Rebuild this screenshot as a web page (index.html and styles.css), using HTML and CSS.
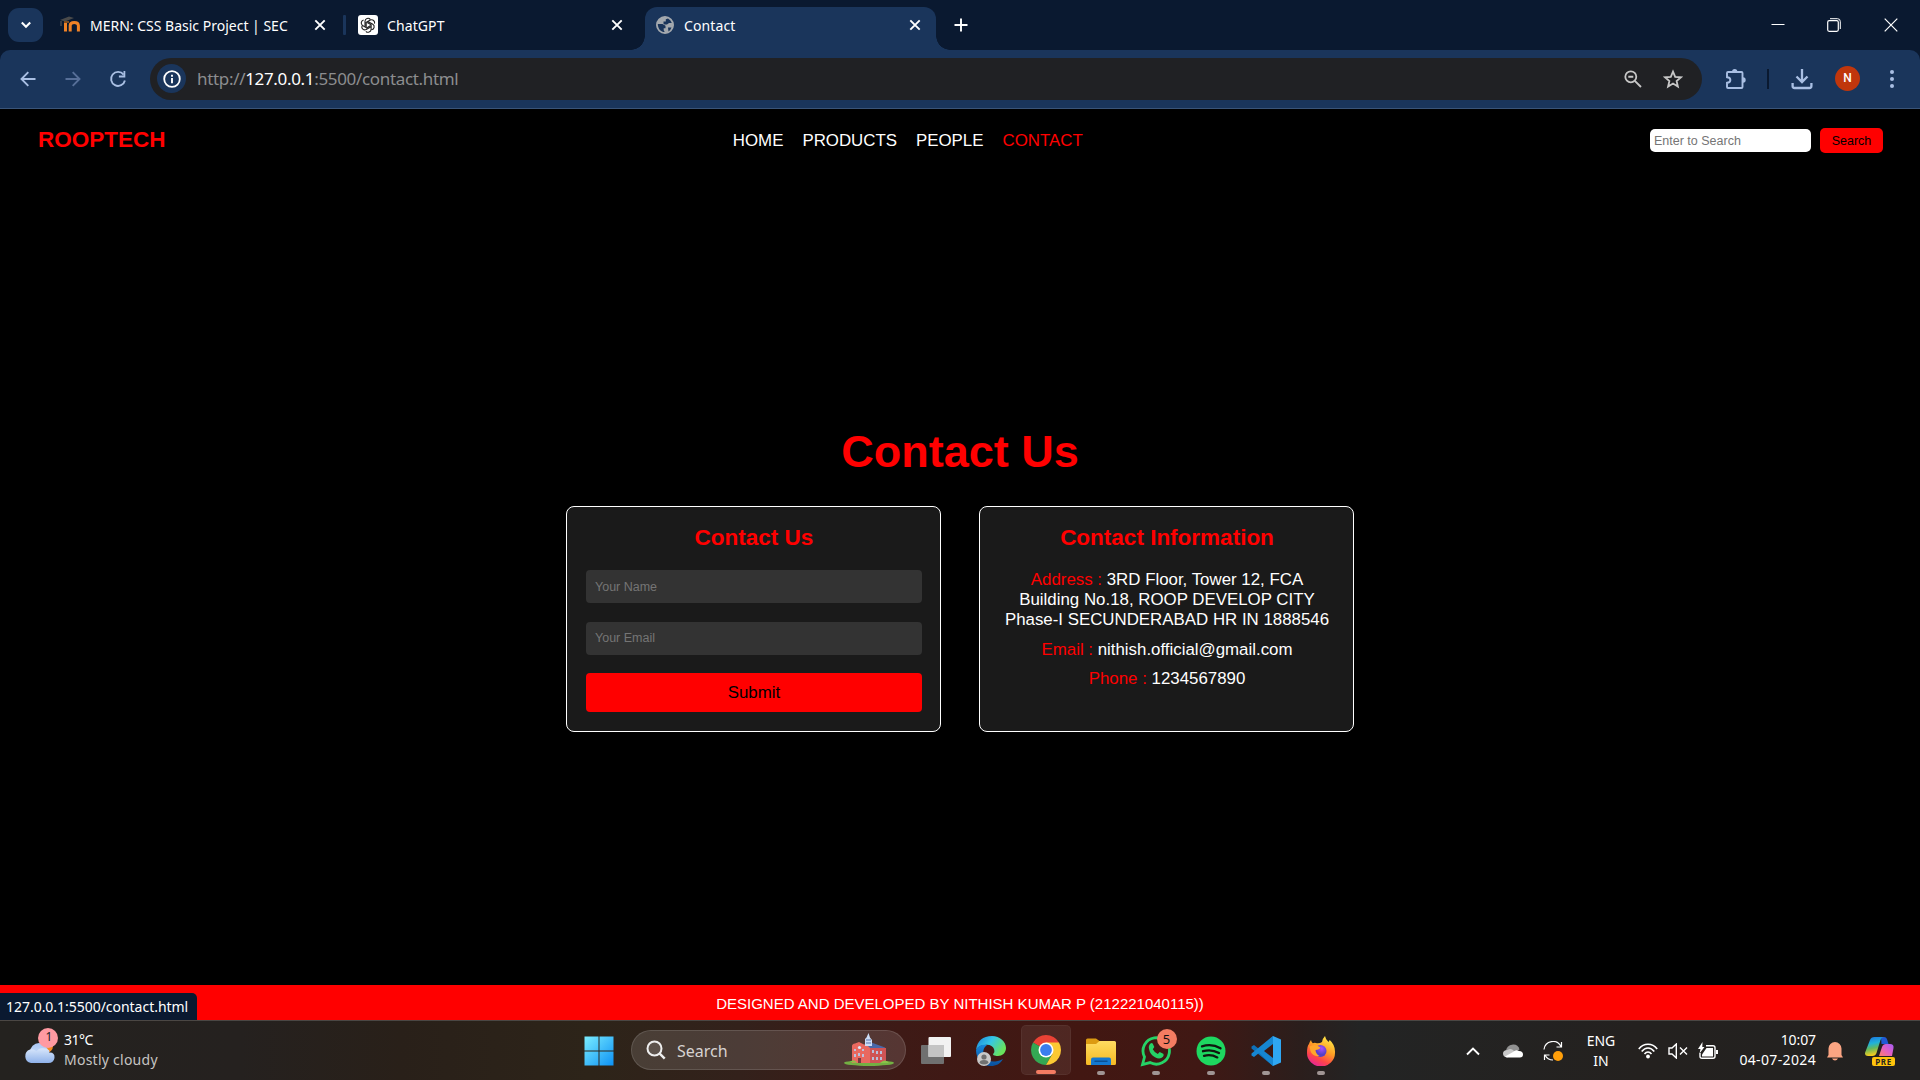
FILE: index.html
```html
<!DOCTYPE html>
<html lang="en">
<head>
<meta charset="utf-8">
<title>Contact</title>
<link rel="stylesheet" href="styles.css">
</head>
<body>
<div class="screen">
  <header class="tabstrip">
    <button class="tab-menu" aria-label="Search tabs"><svg width="12" height="8" viewBox="0 0 12 8"><path d="M1.8 1.500 6 5.700l4.200-4.200" fill="none" stroke="#fff" stroke-width="2.100"/></svg></button>
    <div class="tab tab-mern">
      <svg class="favicon" width="20" height="20" viewBox="0 0 20 20"><path d="M0 5 9 1.500 14 3 5 6.500z" fill="#4a4a4a"/><path d="M1 6v5" stroke="#665f58" stroke-width="1"/><path d="M5.500 8v8.500M10.200 16.500v-6q0-3 4-3t4.200 3v6" fill="none" stroke="#f08226" stroke-width="3"/><path d="M4 7h5" stroke="#7c4a20" stroke-width="2"/></svg>
      <span class="tab-title t-mern">MERN: CSS Basic Project | SEC</span>
      <svg class="close" width="12" height="12" viewBox="0 0 12 12"><path d="m1.300 1.300 9.400 9.400m0-9.400-9.400 9.400" stroke="#fff" stroke-width="1.900"/></svg>
    </div>
    <i class="tab-sep"></i>
    <div class="tab tab-gpt">
      <svg class="favicon" width="20" height="20" viewBox="0 0 20 20"><rect width="20" height="20" rx="3" fill="#fff"/><g fill="none" stroke="#222" stroke-width="1.100"><path id="petal" d="M7 11.800V6.200a3 3 0 0 1 5.300-1.800M8.200 12V7.400l4.100-2.300a3 3 0 0 1 4.200 3.600"/><use href="#petal" transform="rotate(120 10 10)"/><use href="#petal" transform="rotate(240 10 10)"/></g></svg>
      <span class="tab-title t-gpt">ChatGPT</span>
      <svg class="close" width="12" height="12" viewBox="0 0 12 12"><path d="m1.300 1.300 9.400 9.400m0-9.400-9.400 9.400" stroke="#fff" stroke-width="1.900"/></svg>
    </div>
    <div class="tab tab-active">
      <svg class="favicon" width="20" height="20" viewBox="0 0 20 20"><circle cx="10" cy="10" r="8.100" fill="#a3a8ae" stroke="#a3a8ae" stroke-width="1.800"/><path d="M2.800 9h4.700l3 1.800v2.400H8.700v2l1 1.900C6 17 2.800 14 2.800 9zM8.500 8.700V6.500h2.300V4.300L13 3.500q3 1.500 3.800 4.500H14l-2 1.500H9.500zM13 12.500h3.500q-1 2.700-3 4z" fill="#1a355b"/></svg>
      <span class="tab-title t-contact">Contact</span>
      <svg class="close" width="12" height="12" viewBox="0 0 12 12"><path d="m1.300 1.300 9.400 9.400m0-9.400-9.400 9.400" stroke="#fff" stroke-width="1.900"/></svg>
    </div>
    <svg class="plus" width="14" height="14" viewBox="0 0 14 14"><path d="M7 .5v13M.5 7h13" stroke="#fff" stroke-width="1.900"/></svg>
    <div class="win-controls">
      <svg width="14" height="14" viewBox="0 0 14 14"><path d="M.5 6.500h13" stroke="#fff"/></svg>
      <svg width="14" height="14" viewBox="0 0 14 14"><path d="M3 .7h7.500q2.800 0 2.800 2.800V11" fill="none" stroke="#fff"/><rect x=".7" y="2.700" width="10.600" height="10.600" rx="1.500" fill="none" stroke="#fff" stroke-width="1.200"/></svg>
      <svg width="14" height="14" viewBox="0 0 14 14"><path d="m.7.700 12.600 12.600m0-12.600L.7 13.300" stroke="#fff" stroke-width="1.200"/></svg>
    </div>
  </header>

  <div class="toolbar-back"><div class="toolbar">
    <svg class="nav-ico" width="16" height="16" viewBox="0 0 16 16"><path d="M15.500 8H2M8.300 1.200 1.500 8l6.800 6.800" fill="none" stroke="#a9bfe3" stroke-width="1.900"/></svg>
    <svg class="nav-ico" width="16" height="16" viewBox="0 0 16 16"><path d="M.5 8H14M7.700 1.200 14.500 8l-6.800 6.800" fill="none" stroke="#576f98" stroke-width="1.900"/></svg>
    <svg class="nav-ico" width="18" height="18" viewBox="0 0 18 18"><path d="M14.600 4.600A7 7 0 1 0 15.900 10.500" fill="none" stroke="#a9bfe3" stroke-width="1.900"/><path d="M16.300 1v6.400H9.900V5.600h4.600V1z" fill="#a9bfe3"/></svg>
    <div class="omnibox">
      <span class="site-info"><svg width="18" height="18" viewBox="0 0 18 18"><circle cx="9" cy="9" r="7.800" fill="none" stroke="#fff" stroke-width="1.800"/><path d="M9 8v5.200M9 4.700v2" stroke="#fff" stroke-width="1.900"/></svg></span>
      <span class="url">http://<b>127.0.0.1</b>:5500/contact.html</span>
      <svg class="mag" width="18" height="18" viewBox="0 0 18 18"><circle cx="6.800" cy="6.800" r="5.500" fill="none" stroke="#c7c7c7" stroke-width="1.800"/><path d="M4.300 6.800h5M10.800 10.800l6.200 6.200" stroke="#c7c7c7" stroke-width="1.900"/></svg>
      <svg width="20" height="20" viewBox="0 0 20 20"><path d="m10 2.600 2.200 5.200 5.700.5-4.300 3.700 1.300 5.600-4.900-3-4.900 3L6.400 12 2.100 8.300l5.700-.5z" fill="none" stroke="#c7c7c7" stroke-width="1.800"/></svg>
    </div>
    <svg class="puzzle" width="22" height="22" viewBox="0 0 22 22"><path d="M3 4h13.500q1 0 1 1v14q0 1-1 1H3q-1 0-1-1v-4.200c4.500-.3 4.500-5.300 0-5.600V5q0-1 1-1z" fill="none" stroke="#a9bfe3" stroke-width="1.900"/><path d="M7 4a2.700 3 0 0 1 5.400 0zM18 9.300a2.700 2.700 0 0 1 0 5.400z" fill="#a9bfe3"/></svg>
    <i class="tool-sep"></i>
    <svg class="download" width="22" height="22" viewBox="0 0 22 22"><path d="M11 1v12M5.500 8.500 11 14l5.500-5.500M1.600 15v3q0 2 2 2h14.800q2 0 2-2v-3" fill="none" stroke="#a9bfe3" stroke-width="2.300"/></svg>
    <span class="avatar">N</span>
    <svg class="dots" width="4" height="20" viewBox="0 0 4 20" fill="#a9bfe3"><circle cx="2" cy="3" r="2"/><circle cx="2" cy="10" r="2"/><circle cx="2" cy="17" r="2"/></svg>
  </div></div>

  <main class="page">
    <nav class="site-nav">
      <div class="brand">ROOPTECH</div>
      <ul class="links"><li>HOME</li><li>PRODUCTS</li><li>PEOPLE</li><li class="current">CONTACT</li></ul>
      <form class="search"><input type="text" placeholder="Enter to Search"><button type="button">Search</button></form>
    </nav>
    <section class="contact">
      <h1>Contact Us</h1>
      <div class="cards">
        <form class="card">
          <h2>Contact Us</h2>
          <input type="text" placeholder="Your Name">
          <input type="text" placeholder="Your Email">
          <button type="button">Submit</button>
        </form>
        <div class="card">
          <h2>Contact Information</h2>
          <p><span>Address :</span> 3RD Floor, Tower 12, FCA<br>Building No.18, ROOP DEVELOP CITY<br>Phase-I SECUNDERABAD HR IN 1888546</p>
          <p><span>Email :</span> nithish.official@gmail.com</p>
          <p><span>Phone :</span> 1234567890</p>
        </div>
      </div>
    </section>
    <footer class="site-footer">DESIGNED AND DEVELOPED BY NITHISH KUMAR P (212221040115))</footer>
    <div class="status">127.0.0.1:5500/contact.html</div>
  </main>

  <div class="taskbar">
    <div class="weather">
      <svg width="36" height="38" viewBox="0 0 36 38"><defs><linearGradient id="cl" x2="0" y2="1"><stop stop-color="#a9c6f5"/><stop offset="1" stop-color="#dbe8fb"/></linearGradient><linearGradient id="cb" x2="0" y2="1"><stop stop-color="#d9e7fb"/><stop offset="1" stop-color="#8fb2ea"/></linearGradient></defs><circle cx="23" cy="19" r="7" fill="#f58a1f"/><circle cx="16" cy="25" r="9" fill="url(#cl)"/><path d="M8 36a7 7 0 0 1-1-13.500q4-1 6.500 2Q16 20 22 21.500t4 4q6-.5 5.500 5.500-1 5-6 5z" fill="url(#cb)"/><circle cx="25" cy="11" r="10" fill="#ff9aa2"/></svg>
      <span class="count">1</span>
      <div class="weather-text"><span class="temp">31°C</span><span class="sky">Mostly cloudy</span></div>
    </div>
    <div class="cell start"><svg width="30" height="30" viewBox="0 0 30 30"><defs><linearGradient id="wn" gradientUnits="userSpaceOnUse" x1="0" y1="0" x2="30" y2="30"><stop stop-color="#7ceeff"/><stop offset="1" stop-color="#0b90f5"/></linearGradient></defs><path d="M.5.500h14v14H.5zM15.500.500h14v14h-14zM.5 15.500h14v14H.5zM15.500 15.500h14v14h-14z" fill="url(#wn)"/></svg></div>
    <div class="os-search">
      <svg width="20" height="20" viewBox="0 0 20 20"><circle cx="8.500" cy="8.500" r="7" fill="#ffffff1c" stroke="#eee" stroke-width="2"/><path d="m13.700 13.700 5 5" stroke="#eee" stroke-width="2.400"/></svg>
      <span>Search</span>
      <svg class="hall" width="52" height="34" viewBox="0 0 52 34"><ellipse cx="26" cy="30" rx="25" ry="3" fill="#73b043"/><path d="M9 13q0-2 3-2.500L16 9l5 2.500h4L43 16v14H9z" fill="#e9685f"/><path d="M24 12 27 9l15 5.500V18L27 15z" fill="#4967a8"/><path d="M27 15h16v15H27z" fill="#cf5455"/><path d="M22 13V6l1.500-1.500L25.500 0 27 4.500 29 7v6z" fill="#cbdcf5"/><path d="M23 7h5M23 10h5" stroke="#5975ad"/><path d="M12 16v2M12 21v3M16 20v3M20 16v2M20 21v3M30 17v3M34 18v3M38 18v3M30 24v3M34 24v3M38 24v3" stroke="#b7cae9" stroke-width="1.800"/><path d="M15 25h3v5h-3z" fill="#783942"/><circle cx="16.500" cy="14.500" r="1.600" fill="#dbe7fa"/><path d="M7 29q4-4 7 1zM37 30q5-5 9 0z" fill="#8bc34a"/></svg>
    </div>
    <div class="cell"><svg width="30" height="30" viewBox="0 0 30 30"><rect y="9" width="23" height="19" rx="1" fill="#707070"/><rect x="7.500" y="1" width="22.500" height="20" rx="1" fill="#f2f2f2"/><path d="M7.500 9H23v12H7.500z" fill="#c4c4c4"/></svg></div>
    <div class="cell"><svg width="32" height="32" viewBox="0 0 32 32"><defs><linearGradient id="ea" x2="1" y2=".5"><stop stop-color="#1b83dc"/><stop offset=".5" stop-color="#35c6e8"/><stop offset="1" stop-color="#69e35c"/></linearGradient><linearGradient id="eb" x2="0" y2="1"><stop stop-color="#1687dc"/><stop offset="1" stop-color="#0a4f9c"/></linearGradient></defs><path d="M1 15Q3 1 17 1c8 0 14 6 14 12 0 5-4 8-8 8-4 0-5-1-5-2 1-1 2-2 1-5-1-3-5-5-9-4-5 0-8 3-9 5z" fill="url(#ea)"/><path d="M1 15c2-4 6-6 11-5-4 3-5 8-2 13 3 4 10 5 18 1-3 5-7 7-12 7C7 31 1 24 1 15z" fill="url(#eb)"/><circle cx="9" cy="24" r="7" fill="#c9c9c9"/><circle cx="9" cy="22" r="2.600" fill="#707070"/><path d="M4.500 28q0-3 4.500-3t4.500 3Q9 31 4.500 28z" fill="#707070"/></svg></div>
    <div class="cell active"><svg width="30" height="30" viewBox="0 0 30 30"><path d="M15 15 2.010 7.500A15 15 0 0 1 27.990 7.500z" fill="#e94235"/><path d="M15 15 2.010 7.500A15 15 0 0 0 15 30l6.500-11.250z" fill="#34a853"/><path d="M15 15V7.500h12.990A15 15 0 0 1 15 30l6.500-11.250z" fill="#fcc934"/><circle cx="15" cy="15" r="7.500" fill="#fff"/><circle cx="15" cy="15" r="5.900" fill="#3b7ded"/></svg><i class="run wide"></i></div>
    <div class="cell"><svg width="30" height="30" viewBox="0 0 30 30"><defs><linearGradient id="fo" x2="0" y2="1"><stop stop-color="#ffdc61"/><stop offset="1" stop-color="#f5b923"/></linearGradient></defs><path d="M0 4q0-1.500 1.500-1.500H10L13.500 5H20v6H0z" fill="#dc9b12"/><path d="M0 8h10l3.500-3h15q1.500 0 1.500 1.500v21q0 1.500-1.500 1.500h-27Q0 29 0 27.500z" fill="url(#fo)"/><path d="M5 29v-5.500q0-2 2-2h16q2 0 2 2V29z" fill="#1478d0"/><path d="M9 25.200h12" stroke="#0a4f93" stroke-width="1.400" stroke-linecap="round"/></svg><i class="run"></i></div>
    <div class="cell"><svg width="32" height="32" viewBox="0 0 32 32"><path d="M2.500 29.500 4.500 22A13.200 13.200 0 1 1 10 27.600z" fill="none" stroke="#25d366" stroke-width="2.800"/><path d="M10.500 8.500q1.500-1 2.300.3l1.500 3.300-1.500 2.200q1.700 3.400 5 4.700l1.900-2 3.500 1.700q1.200.8-.2 3-3 3.200-8 .5T9.300 15q-1.500-4 1.200-6.500z" fill="#25d366"/></svg><b class="badge">5</b><i class="run"></i></div>
    <div class="cell"><svg width="30" height="30" viewBox="0 0 30 30"><circle cx="15" cy="15" r="14.500" fill="#1ed760"/><path d="M6 10.300q10-3 18.500 2M7 15.200q8.500-2.500 16 1.800M8 19.800q7-2 13.300 1.600" fill="none" stroke="#10150f" stroke-width="2.300" stroke-linecap="round"/></svg><i class="run"></i></div>
    <div class="cell"><svg width="30" height="30" viewBox="0 0 30 30"><path d="M22 0 8 13 3 9 .5 10.500v2L22 30z" fill="#0e70b8"/><path d="M22 30 8 17l-5 4-2.500-1.500v-2L22 0z" fill="#1686d2"/><path d="m22 0 8 3.500v23L22 30z" fill="#2fa7f3"/><path d="M22 8v14l-9-7z" fill="#3c1914"/></svg><i class="run"></i></div>
    <div class="cell"><svg width="30" height="30" viewBox="0 0 30 30"><defs><linearGradient id="ff" x1=".8" y1="0" x2=".3" y2="1"><stop stop-color="#fff04a"/><stop offset=".45" stop-color="#ff9d24"/><stop offset=".75" stop-color="#ff4548"/><stop offset="1" stop-color="#e3249b"/></linearGradient><radialGradient id="fp" cx=".6" cy=".3"><stop stop-color="#a750ff"/><stop offset="1" stop-color="#5540c8"/></radialGradient></defs><path d="M5 4q.3 2 1.800 3.200Q9 6.300 11 7.300q3 .2 5-1.300Q16.500 2.500 19 0q.5 3.500 3.500 6l1.200-2Q29.500 9 29 17A14 13.500 0 0 1 1 17Q1 10 3 8q.5-2 2-4z" fill="url(#ff)"/><circle cx="14.500" cy="15" r="6" fill="url(#fp)"/><path d="M3.500 10.500Q9 7 14.500 11.500q-1 2-5 2.500.3 4 4 6-7 1-9-5z" fill="#ffa62b"/></svg><i class="run"></i></div>

    <div class="tray">
      <span class="slot w40"><svg width="14" height="10" viewBox="0 0 14 10"><path d="m1 8.500 6-6 6 6" fill="none" stroke="#fff" stroke-width="1.900"/></svg></span>
      <span class="slot w40"><svg width="20" height="14" viewBox="0 0 20 14"><path d="M3 8q0-7 7-7.500 5-.3 6.500 5L10 9z" fill="#919191"/><path d="M4 13.500q-4-.5-4-4T4.500 6Q8 3.500 11 7l2 1z" fill="#c9c9c9"/><path d="M2 12.500 10 8q3-3 6-1 4 0 4 3.500t-4 3H4z" fill="#fff"/></svg></span>
      <span class="slot w40"><svg width="20" height="20" viewBox="0 0 20 20"><path d="M1 8.500A9 9 0 0 1 18 5.500M18.500 1v5h-5M1.500 19v-5h5M2 14q2.500 5 8 5" fill="none" stroke="#fff" stroke-width="1.200"/><circle cx="15" cy="15" r="5" fill="#ff9f0a"/></svg></span>
      <span class="lang"><span>ENG</span><span>IN</span></span>
      <span class="slot w30"><svg width="20" height="16" viewBox="0 0 20 16"><path d="M.8 6Q4.500 1.200 10 1.200T19.200 6M3.700 8.500Q6.500 5 10 5t6.300 3.500M6.500 11Q8 9 10 9t3.500 2" fill="none" stroke="#fff" stroke-width="1.600"/><circle cx="10" cy="13.500" r="1.900" fill="#fff"/></svg></span>
      <span class="slot w30"><svg width="20" height="16" viewBox="0 0 20 16"><path d="M1 5h3l4.300-4v14L4 11H1z" fill="none" stroke="#fff" stroke-width="1.400"/><path d="m12 4.500 7 7m0-7-7 7" stroke="#fff" stroke-width="1.400"/></svg></span>
      <span class="slot w30"><svg width="20" height="18" viewBox="0 0 20 18"><path d="M8 3.800h7q2 0 2 2v8.500q0 2-2 2H4q-2 0-2-2V11" fill="none" stroke="#fff" stroke-width="1.400"/><path d="M8.500 6H15v8.500H4V12.500z" fill="#fff"/><path d="M18 8h2v4h-2z" fill="#fff"/><path d="M4.500 0 0 7h2.500l-1 4.500L6.500 5H4.300z" fill="#fff"/></svg></span>
      <span class="clock"><span class="time">10:07</span><span class="date">04-07-2024</span></span>
      <span class="slot bell"><svg width="16" height="20" viewBox="0 0 16 20"><path d="M1.500 14V7.500a6.500 6.500 0 0 1 13 0V14l1.500 2.500H0z" fill="#fba583"/><path d="M5 17.500h6q-1 2-3 2t-3-2z" fill="#fba583"/></svg></span>
      <span class="slot copilot"><svg width="30" height="28" viewBox="0 0 30 28"><defs><linearGradient id="ca" x2=".2" y2="1"><stop stop-color="#1c70e0"/><stop offset=".4" stop-color="#20b2d8"/><stop offset=".65" stop-color="#64b85d"/><stop offset="1" stop-color="#f7cd1d"/></linearGradient><linearGradient id="cc" x1="1" y1="0" x2="0" y2="1"><stop stop-color="#a45cf5"/><stop offset=".5" stop-color="#e260c4"/><stop offset="1" stop-color="#ff7d68"/></linearGradient></defs><path d="M16 0h3q2.500 0 3.300 3l1.200 4h-7z" fill="#2159d4"/><path d="M5 3q1-3 4.500-3h9q-2 0-3 3l-4 13q-1 3-4 3H3q-4 0-2.700-4z" fill="url(#ca)"/><path d="M17 10q1-3 4-3h4q4 0 3.500 4L27 19H14z" fill="url(#cc)"/></svg><b class="pre">PRE</b></span>
    </div>
  </div>
</div>
</body>
</html>
```
FILE: styles.css
```css
* { box-sizing: border-box; }
body { margin: 0; background: #000; }
svg { display: block; flex: none; }
.screen { width: 1920px; height: 1080px; display: flex; flex-direction: column; overflow: hidden; font-family: "Noto Sans", sans-serif; color: #fff; }

/* Browser tabs */
.tabstrip { height: 50px; flex: none; display: flex; background: #0a1930; padding-left: 8px; }
.tab-menu { width: 35px; height: 34px; margin-top: 8px; padding: 0; border: 0; border-radius: 11px; background: #1a355b; display: flex; align-items: center; justify-content: center; }
.tab { display: flex; align-items: center; height: 50px; }
.tab-title { flex: 1; font-size: 14px; line-height: 20px; padding-top: 1px; white-space: nowrap; margin-left: 9px; }
.tab-mern { width: 266px; margin-left: 17px; }
.tab-gpt { width: 265px; margin-left: 12px; }
.tab-mern .tab-title { margin-left: 10px; }
.tab-sep { width: 3px; height: 20px; margin: 15px 0 0 17px; border-radius: 1px; background: #1a355b; }
.tab-active { position: relative; width: 291px; height: 43px; margin: 7px 0 0 22px; padding: 0 15px 7px 10px; background: #1a355b; border-radius: 12px 12px 0 0; }
.tab-active::before, .tab-active::after { content: ""; position: absolute; bottom: 0; width: 14px; height: 14px; }
.tab-active::before { left: -14px; background: radial-gradient(circle at 0 0, transparent 13.5px, #1a355b 14px); }
.tab-active::after { right: -14px; background: radial-gradient(circle at 100% 0, transparent 13.5px, #1a355b 14px); }
.t-mern { letter-spacing: 0; }
.t-gpt, .t-contact { letter-spacing: .1px; }
.plus { margin: 18px 0 0 18px; }
.win-controls { display: flex; gap: 43px; margin: 18px 22px 0 auto; }
.win-controls svg:first-child { margin-right: -1px; }

/* Address bar */
.toolbar-back { height: 59px; flex: none; background: #0a1930; }
.toolbar { height: 59px; display: flex; align-items: center; padding: 0 26px 1px 20px; background: #1a355b; border-bottom: 1px solid #3a5478; border-radius: 10px 10px 0 0; }
.nav-ico + .nav-ico { margin-left: 28.5px; }
.omnibox { width: 1552px; height: 42px; margin-left: 23px; padding: 0 19px 0 7px; display: flex; align-items: center; border-radius: 21px; background: #202124; }
.site-info { width: 29px; height: 29px; border-radius: 50%; background: #1a355b; display: flex; align-items: center; justify-content: center; }
.url { flex: 1; margin-left: 11px; padding-top: 1px; font-size: 17px; line-height: 24px; color: #8c8d8f; letter-spacing: -.33px; }
.url b { font-weight: 400; color: #fff; }
.mag { margin-right: 21px; }
.puzzle { margin-left: 23px; }
.tool-sep { width: 2px; height: 20px; margin-left: 20px; background: #0a1930; }
.download { margin-left: 22px; }
.avatar { width: 25px; height: 25px; margin-left: 22px; border-radius: 50%; background: #c0360c; font: 500 12px/25px Roboto, sans-serif; text-align: center; }
.dots { margin-left: auto; }

/* Site */
.page { position: relative; height: 911px; flex: none; display: flex; flex-direction: column; font-family: "Liberation Sans", Arial, sans-serif; background: #000; }
.page input, .page button { font-family: inherit; border: 0; outline: 0; }
.site-nav { height: 63px; flex: none; display: flex; justify-content: space-between; align-items: center; padding: 0 37px 0 38px; }
.brand { font-size: 22.5px; font-weight: 700; padding-bottom: 1px; }
.brand, .current { color: #f00; }
.links { display: flex; gap: 19px; margin: 0; padding: 0; list-style: none; font-size: 16.875px; line-height: 20px; }
.search { display: flex; align-items: center; justify-content: flex-end; gap: 9px; }
.search input { width: 161px; height: 23px; padding: 0 4px; border-radius: 5px; background: #fff; font-size: 12.5px; }
.search button { width: 63px; height: 25px; padding: 0; border-radius: 5px; background: #f00; color: #000; font-size: 12.5px; }
input::placeholder { color: #757575; }
.contact { flex: 1; display: flex; flex-direction: column; align-items: center; padding-top: 254px; }
h1 { margin: 0; height: 52px; font-size: 45px; line-height: 52px; color: #f00; }
.cards { display: flex; gap: 38px; margin-top: 28px; }
.card { width: 375px; height: 226px; padding: 18px 18px 18px 19px; display: flex; flex-direction: column; border: 1px solid #fff; border-radius: 8px; background: #1a1a1a; text-align: center; }
h2 { margin: 0 0 19px; font-size: 22.5px; line-height: 26px; color: #f00; }
.card input { height: 33px; flex: none; margin-bottom: 19px; padding: 0 9px; border-radius: 4px; background: #333; font-size: 12.5px; }
.card input + input { margin-bottom: 18px; padding-bottom: 2px; }
.card button { height: 39px; padding: 0; border-radius: 4px; background: #f00; color: #000; font-size: 16.875px; }
.card p { margin: 0 0 9px; font-size: 16.875px; line-height: 20px; white-space: nowrap; }
.card h2 + p { margin-bottom: 10px; }
.card p span { color: #f00; }
.site-footer { height: 35px; flex: none; background: #f00; text-align: center; font-size: 15px; line-height: 37px; }
.status { position: absolute; left: 0; bottom: 0; width: 197px; height: 27px; padding-left: 6px; border-radius: 0 5px 0 0; background: #0a1930; font: 14px/27px "Noto Sans", sans-serif; letter-spacing: -.03px; white-space: nowrap; }

/* Taskbar */
.taskbar { height: 60px; flex: none; display: flex; border-top: 1px solid #4b4744; background: linear-gradient(90deg, #24221f 0, #25211f 240px, #292019 400px, #2d2419 590px, #33211b 740px, #3e1a16 900px, #421712 1080px, #401814 1200px, #2b1e1c 1300px, #232424 1360px, #24211f 1640px, #222120 1920px); }
.weather { position: relative; width: 571.5px; display: flex; padding: 6px 0 0 23px; }
.count { position: absolute; left: 39px; top: 6px; width: 20px; font-size: 12px; line-height: 20px; text-align: center; color: #222; }
.weather-text { display: flex; flex-direction: column; margin-left: 5px; padding-top: 3px; font-size: 14px; line-height: 20px; white-space: nowrap; }
.temp { letter-spacing: -.5px; }
.sky { color: #c6c4c2; letter-spacing: .25px; }
.cell { position: relative; width: 55px; height: 59px; display: flex; align-items: center; justify-content: center; }
.cell.active { width: 50px; height: 50px; margin: 4px 2.5px 0; border-radius: 5px; background: #ffffff12; box-shadow: inset 0 0 0 1px #ffffff0c; }
.run { position: absolute; left: 23.5px; bottom: 5px; width: 8px; height: 4px; border-radius: 2px; background: #a09594; }
.run.wide { left: 15px; bottom: 1px; width: 20px; background: #f47c62; }
.badge { position: absolute; left: 28.5px; top: 8px; width: 20px; height: 20px; border-radius: 50%; background: #f47c62; color: #111; font-size: 13px; font-weight: 400; line-height: 20px; text-align: center; }
.os-search { width: 275px; height: 40px; margin: 9px 2px 0 4.5px; padding: 0 10px 0 14px; display: flex; align-items: center; border: 1px solid #ffffff20; border-radius: 20px; background: #ffffff20; font-size: 16px; color: #d7d3d1; }
.os-search span { margin-left: 11px; padding-top: 1px; letter-spacing: 0; }
.hall { margin: -1px 0 0 auto; }
.tray { display: flex; align-items: center; margin-left: auto; padding-right: 20px; font-size: 14px; line-height: 20px; }
.slot { display: flex; align-items: center; justify-content: center; }
.w40 { width: 40px; }
.w30 { width: 30px; }
.lang { width: 56px; margin-right: 4px; display: flex; flex-direction: column; align-items: center; }
.clock { width: 93px; display: flex; flex-direction: column; align-items: flex-end; margin-top: -2px; white-space: nowrap; }
.time { letter-spacing: -.1px; }
.date { letter-spacing: .35px; }
.bell { width: 30px; margin-left: 4px; }
.copilot { position: relative; width: 40px; margin-left: 10px; }
.pre { position: absolute; left: 12px; top: 20px; width: 23px; height: 9px; border-radius: 2px; background: #ffc40c; color: #222; font-size: 8px; line-height: 9px; letter-spacing: .6px; text-align: center; }
```
